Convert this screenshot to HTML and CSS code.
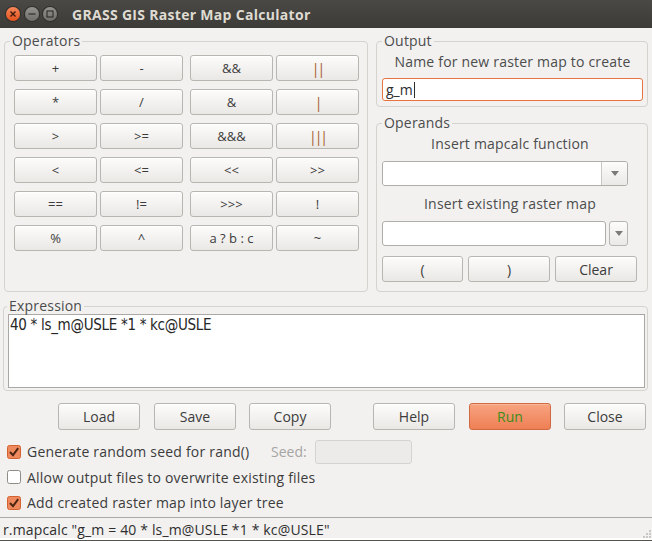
FILE: index.html
```html
<!DOCTYPE html>
<html>
<head>
<meta charset="utf-8">
<title>GRASS GIS Raster Map Calculator</title>
<link rel="stylesheet" href="styles.css">
</head>
<body>
<div class="window">
  <div class="titlebar">
    <span class="wbtn close"><svg width="8" height="8" viewBox="0 0 8 8"><path d="M1.5 1.5 L6.5 6.5 M6.5 1.5 L1.5 6.5" stroke="#3a1a0c" stroke-width="1.4"/></svg></span>
    <span class="wbtn"><svg width="8" height="8" viewBox="0 0 8 8"><path d="M0.5 4 H7.5" stroke="#2e2d2a" stroke-width="1.2"/></svg></span>
    <span class="wbtn"><svg width="8" height="8" viewBox="0 0 8 8"><rect x="1" y="1" width="6" height="6" fill="none" stroke="#2e2d2a" stroke-width="1.1"/></svg></span>
    <span class="title">GRASS GIS Raster Map Calculator</span>
  </div>

  <div class="content">
    <div class="top">
      <fieldset class="group operators">
        <legend>Operators</legend>
        <div class="ops">
          <div class="ops-half">
            <button class="btn">+</button>
            <button class="btn">-</button>
            <button class="btn">*</button>
            <button class="btn">/</button>
            <button class="btn">&gt;</button>
            <button class="btn">&gt;=</button>
            <button class="btn">&lt;</button>
            <button class="btn">&lt;=</button>
            <button class="btn">==</button>
            <button class="btn">!=</button>
            <button class="btn">%</button>
            <button class="btn">^</button>
          </div>
          <div class="ops-half">
            <button class="btn">&amp;&amp;</button>
            <button class="btn pipe">||</button>
            <button class="btn">&amp;</button>
            <button class="btn pipe">|</button>
            <button class="btn">&amp;&amp;&amp;</button>
            <button class="btn pipe">|||</button>
            <button class="btn">&lt;&lt;</button>
            <button class="btn">&gt;&gt;</button>
            <button class="btn">&gt;&gt;&gt;</button>
            <button class="btn">!</button>
            <button class="btn">a ? b : c</button>
            <button class="btn">~</button>
          </div>
        </div>
      </fieldset>

      <div class="side">
        <fieldset class="group output">
          <legend>Output</legend>
          <div class="caption">Name for new raster map to create</div>
          <div class="field focused">g_m<span class="caret"></span></div>
        </fieldset>

        <fieldset class="group operands">
          <legend>Operands</legend>
          <div class="caption">Insert mapcalc function</div>
          <div class="combo">
            <div class="combo-field"></div>
            <div class="combo-arrow"><svg width="8" height="5" viewBox="0 0 8 5"><path d="M0 0 H8 L4 5 Z" fill="#7b7a76"/></svg></div>
          </div>
          <div class="caption cap2">Insert existing raster map</div>
          <div class="split">
            <div class="field plain"></div>
            <div class="arrow-btn"><svg width="8" height="5" viewBox="0 0 8 5"><path d="M0 0 H8 L4 5 Z" fill="#7b7a76"/></svg></div>
          </div>
          <div class="paren-row">
            <button class="btn pb">(</button>
            <button class="btn pb">)</button>
            <button class="btn pb">Clear</button>
          </div>
        </fieldset>
      </div>
    </div>

    <fieldset class="group expression">
      <legend>Expression</legend>
      <div class="expr">40 * ls_m@USLE *1 * kc@USLE</div>
    </fieldset>

    <div class="actions">
      <button class="btn act">Load</button>
      <button class="btn act save">Save</button>
      <button class="btn act">Copy</button>
      <button class="btn act help">Help</button>
      <button class="btn act run">Run</button>
      <button class="btn act">Close</button>
    </div>

    <div class="checks">
      <div class="check-row">
        <label class="check first">
          <svg class="box" width="14" height="14" viewBox="0 0 14 14"><rect x="0.5" y="0.5" width="13" height="13" rx="2" fill="#ef8a5e" stroke="#d2622f"/><path d="M3 7 L6 10.2 L11.2 3.2" fill="none" stroke="#4e2714" stroke-width="2"/></svg>
          <span>Generate random seed for rand()</span>
        </label>
        <span class="seed-label">Seed:</span>
        <div class="seed-input"></div>
      </div>
      <div class="check-row">
        <label class="check">
          <svg class="box" width="14" height="14" viewBox="0 0 14 14"><rect x="0.5" y="0.5" width="13" height="13" rx="2" fill="#ffffff" stroke="#8e8c87"/></svg>
          <span>Allow output files to overwrite existing files</span>
        </label>
      </div>
      <div class="check-row">
        <label class="check">
          <svg class="box" width="14" height="14" viewBox="0 0 14 14"><rect x="0.5" y="0.5" width="13" height="13" rx="2" fill="#ef8a5e" stroke="#d2622f"/><path d="M3 7 L6 10.2 L11.2 3.2" fill="none" stroke="#4e2714" stroke-width="2"/></svg>
          <span>Add created raster map into layer tree</span>
        </label>
      </div>
    </div>
  </div>

  <div class="statusbar">
    <span>r.mapcalc "g_m = 40 * ls_m@USLE *1 * kc@USLE"</span>
    <svg class="grip" width="11" height="11" viewBox="0 0 11 11">
      <rect x="8" y="2" width="2" height="2" fill="#c9c7c3"/>
      <rect x="5" y="5" width="2" height="2" fill="#c9c7c3"/>
      <rect x="8" y="5" width="2" height="2" fill="#c9c7c3"/>
      <rect x="2" y="8" width="2" height="2" fill="#c9c7c3"/>
      <rect x="5" y="8" width="2" height="2" fill="#c9c7c3"/>
      <rect x="8" y="8" width="2" height="2" fill="#c9c7c3"/>
    </svg>
  </div>
</div>
</body>
</html>
```

FILE: styles.css
```css
* {
  box-sizing: border-box;
}

html,
body {
  margin: 0;
  padding: 0;
}

body {
  width: 652px;
  height: 541px;
  overflow: hidden;
  background: #f2f1f0;
  font-family: "Open Sans", "Noto Sans", sans-serif;
  font-size: 14px;
  color: #3c3c3c;
}

.window {
  width: 652px;
  height: 541px;
  display: flex;
  flex-direction: column;
  background: #f2f1f0;
}

/* title bar */
.titlebar {
  height: 28px;
  flex: none;
  display: flex;
  align-items: center;
  padding-left: 6px;
  background: linear-gradient(#4a4945, #3c3b37);
}

.wbtn {
  width: 14px;
  height: 14px;
  border-radius: 50%;
  margin-right: 4.5px;
  display: flex;
  align-items: center;
  justify-content: center;
  background: linear-gradient(#94938e, #6f6e6a);
  box-shadow: 0 0 0 1px #302f2c;
}

.wbtn.close {
  background: linear-gradient(#f4875a, #e4511c);
}

.title {
  margin-left: 10.5px;
  color: #dfdbd2;
  font-weight: bold;
  font-size: 14px;
  letter-spacing: 0.3px;
}

/* content */
.content {
  flex: 1;
  padding: 5px 4px 0 4px;
  display: flex;
  flex-direction: column;
}

.top {
  display: flex;
  gap: 8px;
  align-items: stretch;
}

.group {
  margin: 0;
  min-width: 0;
  border: 1px solid #d5d3ce;
  border-radius: 4px;
}

.group legend {
  padding: 0 2px;
  font-size: 14px;
  line-height: 16px;
  letter-spacing: 0.2px;
  color: #4c4c4c;
}

.operators {
  width: 364px;
  padding: 6px 8px 0 9px;
}

.operators legend {
  margin-left: -4px;
}

.ops {
  display: flex;
  gap: 7px;
}

.ops-half {
  display: grid;
  grid-template-columns: 83px 83px;
  grid-auto-rows: 26px;
  column-gap: 3px;
  row-gap: 8px;
}

.btn {
  margin: 0;
  padding: 0;
  height: 26px;
  font-family: inherit;
  font-size: 13px;
  color: #3c3c3c;
  border: 1px solid #b8b6b1;
  border-radius: 3px;
  background: linear-gradient(#fcfcfb, #eae8e5);
  box-shadow: inset 0 1px 0 #ffffff;
}

.btn.pipe {
  color: #a65a2e;
  letter-spacing: -2px;
  font-size: 14px;
}

.side {
  width: 272px;
  display: flex;
  flex-direction: column;
  gap: 8px;
}

.output {
  padding: 5px 4px 5px 5px;
}

.caption {
  text-align: center;
  line-height: 16px;
  font-size: 14px;
  letter-spacing: 0.2px;
  color: #4c4c4c;
}

.field {
  height: 23px;
  margin-top: 8px;
  background: #ffffff;
  border: 1px solid #b0aea9;
  border-radius: 3px;
  padding: 0 3px;
  font-size: 14px;
  line-height: 20px;
  color: #2e2e2e;
  display: flex;
  align-items: center;
}

.field.focused {
  border-color: #e8733f;
}

.caret {
  display: inline-block;
  width: 1px;
  height: 16px;
  margin-left: 1px;
  background: #2e2e2e;
}

.operands {
  padding: 5px 9px 9px 5px;
}

.combo {
  width: 246px;
  height: 25px;
  margin-top: 9px;
  display: flex;
  border: 1px solid #b0aea9;
  border-radius: 3px;
  overflow: hidden;
}

.combo-field {
  flex: 1;
  background: #ffffff;
}

.combo-arrow {
  width: 26px;
  border-left: 1px solid #c9c7c2;
  background: linear-gradient(#fcfcfb, #ebe9e6);
  display: flex;
  align-items: center;
  justify-content: center;
}

.cap2 {
  margin-top: 10px;
}

.split {
  margin-top: 9px;
  display: flex;
  gap: 3px;
  height: 25px;
}

.field.plain {
  margin-top: 0;
  width: 224px;
  height: 25px;
}

.arrow-btn {
  width: 19px;
  height: 25px;
  border: 1px solid #b8b6b1;
  border-radius: 3px;
  background: linear-gradient(#fcfcfb, #ebe9e6);
  display: flex;
  align-items: center;
  justify-content: center;
}

.paren-row {
  margin-top: 10px;
  display: flex;
  gap: 5px;
}

.btn.pb {
  flex: none;
  width: 82px;
  font-size: 14px;
}

.btn.pb:first-child {
  width: 81px;
}

/* expression */
.expression {
  margin: 6px 0 0 -1px;
  width: 645px;
  padding: 0 2px 2px 4px;
}

.expression legend {
  margin-left: -1px;
}

.expr {
  height: 74px;
  background: #ffffff;
  border: 1px solid #aaa8a4;
  padding: 1px 1px;
  font-family: "Liberation Sans Narrow", "DejaVu Sans Condensed", "Open Sans", sans-serif;
  font-size: 15px;
  letter-spacing: -0.3px;
  line-height: 18px;
  color: #262626;
}

/* action buttons */
.actions {
  margin-top: 12px;
  display: flex;
  gap: 13px;
  padding-left: 54px;
}

.btn.act {
  width: 82px;
  height: 27px;
  font-size: 14px;
}

.btn.save {
  margin-left: 1px;
}

.btn.help {
  margin-left: 29px;
}

.btn.run {
  margin-left: 1px;
  background: linear-gradient(#f7a380, #ef7f55);
  border-color: #d06a43;
  box-shadow: inset 0 1px 0 #f9b79a;
  color: #3d8c1c;
}

/* checkboxes */
.checks {
  margin-top: 9px;
  display: flex;
  flex-direction: column;
}

.check-row {
  height: 25.5px;
  display: flex;
  align-items: center;
}

.check {
  display: flex;
  align-items: center;
  gap: 6px;
  margin-left: 3px;
  font-size: 14px;
  letter-spacing: 0.2px;
  color: #3c3c3c;
}

.check.first {
  width: 264px;
}

.box {
  flex: none;
}

.seed-label {
  color: #a6a5a2;
  font-size: 14px;
}

.seed-input {
  margin-left: 8px;
  width: 97px;
  height: 24px;
  background: #ecebe9;
  border: 1px solid #d6d4d0;
  border-radius: 3px;
}

/* status bar */
.statusbar {
  flex: none;
  height: 24px;
  border-top: 1px solid #aba9a5;
  border-bottom: 1px solid #55544f;
  box-shadow: inset 0 -2px 0 #ffffff;
  padding-left: 3px;
  display: flex;
  align-items: center;
  font-size: 14px;
  letter-spacing: 0.15px;
  color: #2e2e2e;
}

.grip {
  margin-left: auto;
  align-self: flex-end;
  margin-bottom: 1px;
}
```
